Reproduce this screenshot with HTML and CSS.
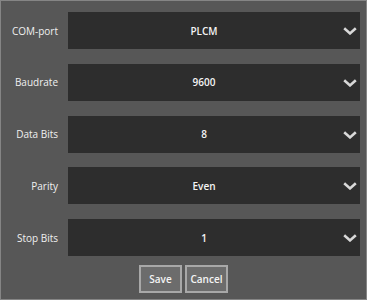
FILE: index.html
```html
<!DOCTYPE html>
<html>
<head>
<meta charset="utf-8">
<link rel="stylesheet" href="styles.css">
</head>
<body>
<div class="panel">
  <div class="rows">
    <div class="row">
      <span class="label">COM-port</span>
      <div class="select"><span class="value">PLCM</span><svg class="chev" width="14" height="8" viewBox="0 0 14 8"><polyline points="1.2,1.2 7,6.4 12.8,1.2" /></svg></div>
    </div>
    <div class="row">
      <span class="label">Baudrate</span>
      <div class="select"><span class="value">9600</span><svg class="chev" width="14" height="8" viewBox="0 0 14 8"><polyline points="1.2,1.2 7,6.4 12.8,1.2" /></svg></div>
    </div>
    <div class="row">
      <span class="label">Data Bits</span>
      <div class="select"><span class="value">8</span><svg class="chev" width="14" height="8" viewBox="0 0 14 8"><polyline points="1.2,1.2 7,6.4 12.8,1.2" /></svg></div>
    </div>
    <div class="row">
      <span class="label">Parity</span>
      <div class="select"><span class="value">Even</span><svg class="chev" width="14" height="8" viewBox="0 0 14 8"><polyline points="1.2,1.2 7,6.4 12.8,1.2" /></svg></div>
    </div>
    <div class="row">
      <span class="label">Stop Bits</span>
      <div class="select"><span class="value">1</span><svg class="chev" width="14" height="8" viewBox="0 0 14 8"><polyline points="1.2,1.2 7,6.4 12.8,1.2" /></svg></div>
    </div>
  </div>
  <div class="buttons">
    <button class="btn">Save</button>
    <button class="btn">Cancel</button>
  </div>
</div>
</body>
</html>
```
FILE: styles.css
```css
html, body {
  margin: 0;
  padding: 0;
  background: #585858;
}
.panel {
  width: 367px;
  height: 300px;
  box-sizing: border-box;
  border: 1px solid #858585;
  background: #575757;
  padding-top: 11px;
  font-family: "Open Sans", "DejaVu Sans", sans-serif;
  font-size: 10px;
  color: #f2f2f2;
}
.rows {
  display: flex;
  flex-direction: column;
  gap: 14.75px;
}
.row {
  display: grid;
  grid-template-columns: 57px 292px;
  column-gap: 10px;
  align-items: center;
  height: 37px;
}
.label {
  text-align: right;
  color: #f0f0f0;
}
.select {
  height: 37px;
  background: #2d2d2d;
  display: flex;
  align-items: center;
  position: relative;
  padding-right: 20px;
}
.value {
  flex: 1;
  text-align: center;
  font-weight: 600;
  color: #f4f4f4;
}
.chev {
  position: absolute;
  right: 3px;
  top: 15px;
}
.chev polyline {
  fill: none;
  stroke: #d8d8d8;
  stroke-width: 2.6;
  stroke-linecap: butt;
}
.buttons {
  display: flex;
  justify-content: center;
  gap: 3px;
  margin-top: 9px;
}
.btn {
  width: 43px;
  height: 28px;
  box-sizing: border-box;
  border: 2px solid #a8a8a8;
  background: #6c6c6c;
  color: #f4f4f4;
  font-family: "Open Sans", "DejaVu Sans", sans-serif;
  font-size: 10px;
  font-weight: 600;
  padding: 0;
}
```
